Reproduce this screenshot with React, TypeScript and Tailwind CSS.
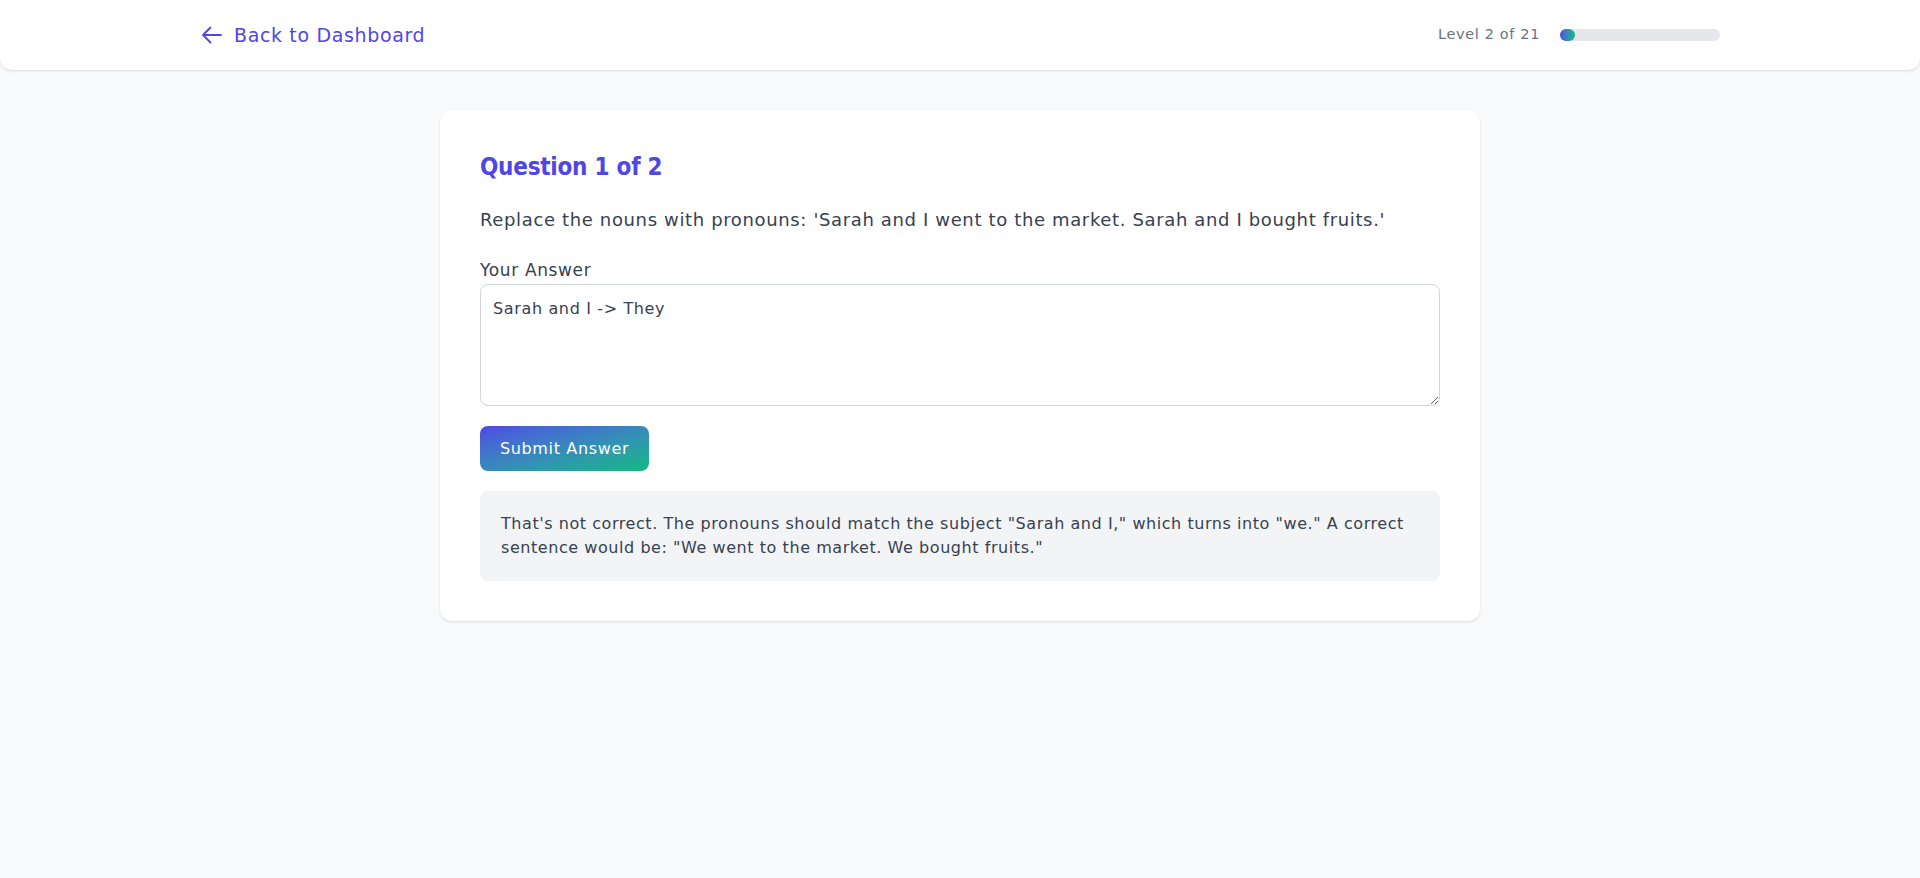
import React from "react";

export default function App() {
  return (
    <div className="min-h-screen bg-gray-50 font-['DejaVu_Sans',sans-serif] tracking-[0.04em] text-[#374151]">
      <header className="rounded-b-xl bg-white shadow-sm">
        <div className="mx-auto flex h-[70px] max-w-[1520px] items-center justify-between">
          <button className="flex items-center gap-2.5 text-[19px] text-[#4f46e5]">
            <svg viewBox="0 0 24 24" width="24" height="24" fill="none" aria-hidden>
              <path
                d="M10.5 19.5 3 12m0 0 7.5-7.5M3 12h18"
                stroke="currentColor"
                strokeWidth="1.8"
                strokeLinecap="round"
                strokeLinejoin="round"
              />
            </svg>
            Back to Dashboard
          </button>
          <div className="flex items-center gap-5">
            <span className="text-[14.5px] text-[#6b7280]">Level 2 of 21</span>
            <div className="h-3 w-40 rounded-full bg-[#e5e7eb]">
              <div
                className="h-3 rounded-full bg-linear-to-r from-[#4f46e5] to-[#10b981]"
                style={{ width: `${(2 / 21) * 100}%` }}
              />
            </div>
          </div>
        </div>
      </header>

      <main className="px-4 py-10">
        <div className="mx-auto max-w-[1040px] rounded-xl bg-white p-10 shadow-sm">
          <h2 className="mb-6 pt-px font-['DejaVu_Sans_Condensed','DejaVu_Sans',sans-serif] text-2xl font-bold tracking-[-0.01em] text-[#4f46e5]">
            Question 1 of 2
          </h2>
          <p className="-mt-px mb-6 text-lg">
            Replace the nouns with pronouns: 'Sarah and I went to the market. Sarah and I bought fruits.'
          </p>
          <label className="mb-0.5 block text-[17px] leading-6">Your Answer</label>
          <textarea
            rows={4}
            defaultValue="Sarah and I -> They"
            className="block w-full rounded-lg border border-gray-300 p-3 text-base outline-none"
          />
          <button className="mt-5 rounded-lg bg-linear-to-br from-[#4f46e5] to-[#10b981] px-5 py-2.5 text-base leading-[25px] text-white">
            Submit Answer
          </button>
          <div className="mt-5 rounded-lg border border-gray-100 bg-gray-100 p-5 text-base tracking-[0.035em]">
            That's not correct. The pronouns should match the subject "Sarah and I," which turns into "we." A
            correct sentence would be: "We went to the market. We bought fruits."
          </div>
        </div>
      </main>
    </div>
  );
}
